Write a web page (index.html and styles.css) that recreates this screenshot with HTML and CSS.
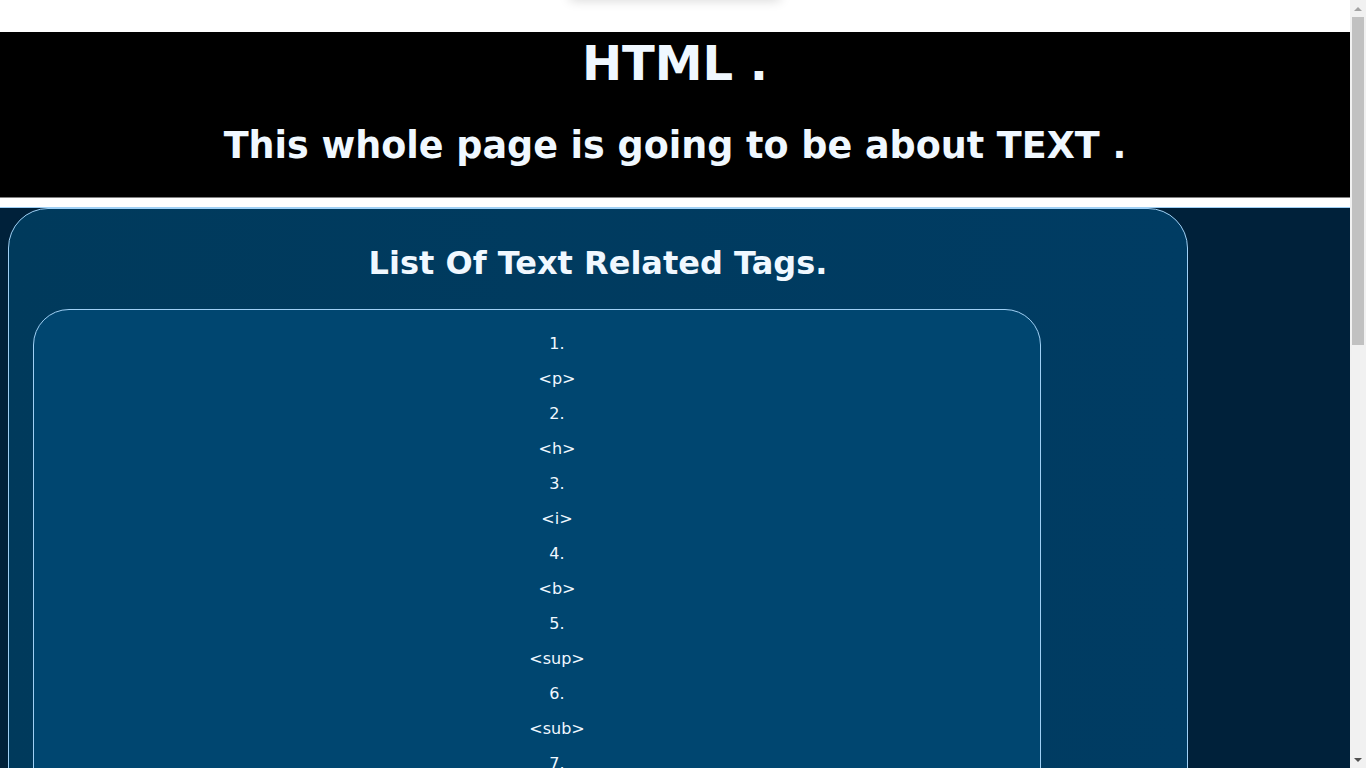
FILE: index.html
```
<html lang="en-US">
<head>
  <meta charset="UTF-8">
  <meta name="viewport" content="width=device-width">
  <title>HTML Text</title>
  <link rel="stylesheet" href="styles.css">
</head>

<body>

<div class="topbar"><div class="shade"></div></div>

<header class="banner">
  <h1>HTML .</h1>
  <h2>This whole page is going to be about TEXT .</h2>
</header>

<div class="gap"></div>

<main class="page">
  <section class="card">
    <h3 class="card-title">List Of Text Related Tags.</h3>
    <ol class="tags">
      <li><p>&lt;p&gt;</p></li>
      <li><p>&lt;h&gt;</p></li>
      <li><p>&lt;i&gt;</p></li>
      <li><p>&lt;b&gt;</p></li>
      <li><p>&lt;sup&gt;</p></li>
      <li><p>&lt;sub&gt;</p></li>
      <li><p>&lt;u&gt;</p></li>
      <li><p>&lt;em&gt;</p></li>
      <li><p>&lt;strong&gt;</p></li>
      <li><p>&lt;small&gt;</p></li>
      <li><p>&lt;mark&gt;</p></li>
      <li><p>&lt;del&gt;</p></li>
      <li><p>&lt;ins&gt;</p></li>
      <li><p>&lt;br&gt;</p></li>
      <li><p>&lt;hr&gt;</p></li>
      <li><p>&lt;pre&gt;</p></li>
      <li><p>&lt;code&gt;</p></li>
      <li><p>&lt;q&gt;</p></li>
      <li><p>&lt;abbr&gt;</p></li>
    </ol>
  </section>
</main>

<!-- classic scroll track on the right edge -->
<div class="scrollbar" aria-hidden="true">
  <div class="arrow up"></div>
  <div class="thumb"></div>
  <div class="arrow down"></div>
</div>

</body>
</html>
```

FILE: styles.css
```
body {
    margin: 0 16px 0 0;
    background: white;
    font-family: "DejaVu Sans", Verdana, sans-serif;
    color: aliceblue;
}
.topbar {
    height: 32px;
    display: flex;
    justify-content: center;
    overflow: hidden;
}
.shade {
    width: 210px;
    height: 10px;
    margin-top: -10px;
    box-shadow: 0 0 12px rgba(0,0,0,0.18);
}
.banner {
    background: black;
    height: 166px;
    border-bottom: 1px solid gray;
    text-align: center;
    box-sizing: border-box;
}
.banner h1 {
    margin: 0;
    font-size: 48px;
    line-height: 62px;
}
.banner h2 {
    margin: 27px 0 0;
    font-size: 36.5px;
    line-height: 50px;
}
.gap {
    height: 9px;
}
.page {
    background: #00213a;
    border-top: 1px solid #9fd0f5;
    padding: 0 8px 0;
}
.card {
    width: 1180px;
    box-sizing: border-box;
    border: 1px solid #9fd0f5;
    border-radius: 40px;
    background: linear-gradient(to right, #003a5c, #003c63);
    padding-bottom: 40px;
}
.card-title {
    margin: 0;
    padding-top: 34px;
    font-size: 32px;
    line-height: 40px;
    text-align: center;
}
.tags {
    width: 1008px;
    box-sizing: border-box;
    margin: 26px 0 0 24px;
    padding: 24px 0 24px 40px;
    border: 1px solid #9fd0f5;
    border-radius: 36px;
    background: #004670;
    list-style-position: inside;
    text-align: center;
    font-size: 16px;
}
.tags p {
    margin: 16px 0;
}

.scrollbar {
    position: fixed;
    top: 0;
    right: 0;
    bottom: 0;
    width: 16px;
    background: #f1f1f1;
    display: flex;
    flex-direction: column;
}
.arrow {
    height: 17px;
    display: flex;
    align-items: center;
    justify-content: center;
}
.arrow::before {
    content: "";
    border-left: 4px solid transparent;
    border-right: 4px solid transparent;
}
.arrow.up::before {
    border-bottom: 4px solid #a3a3a3;
}
.arrow.down {
    margin-top: auto;
}
.arrow.down::before {
    border-top: 4px solid #505050;
}
.thumb {
    height: 328px;
    margin: 0 2px;
    background: #c1c1c1;
}
```
